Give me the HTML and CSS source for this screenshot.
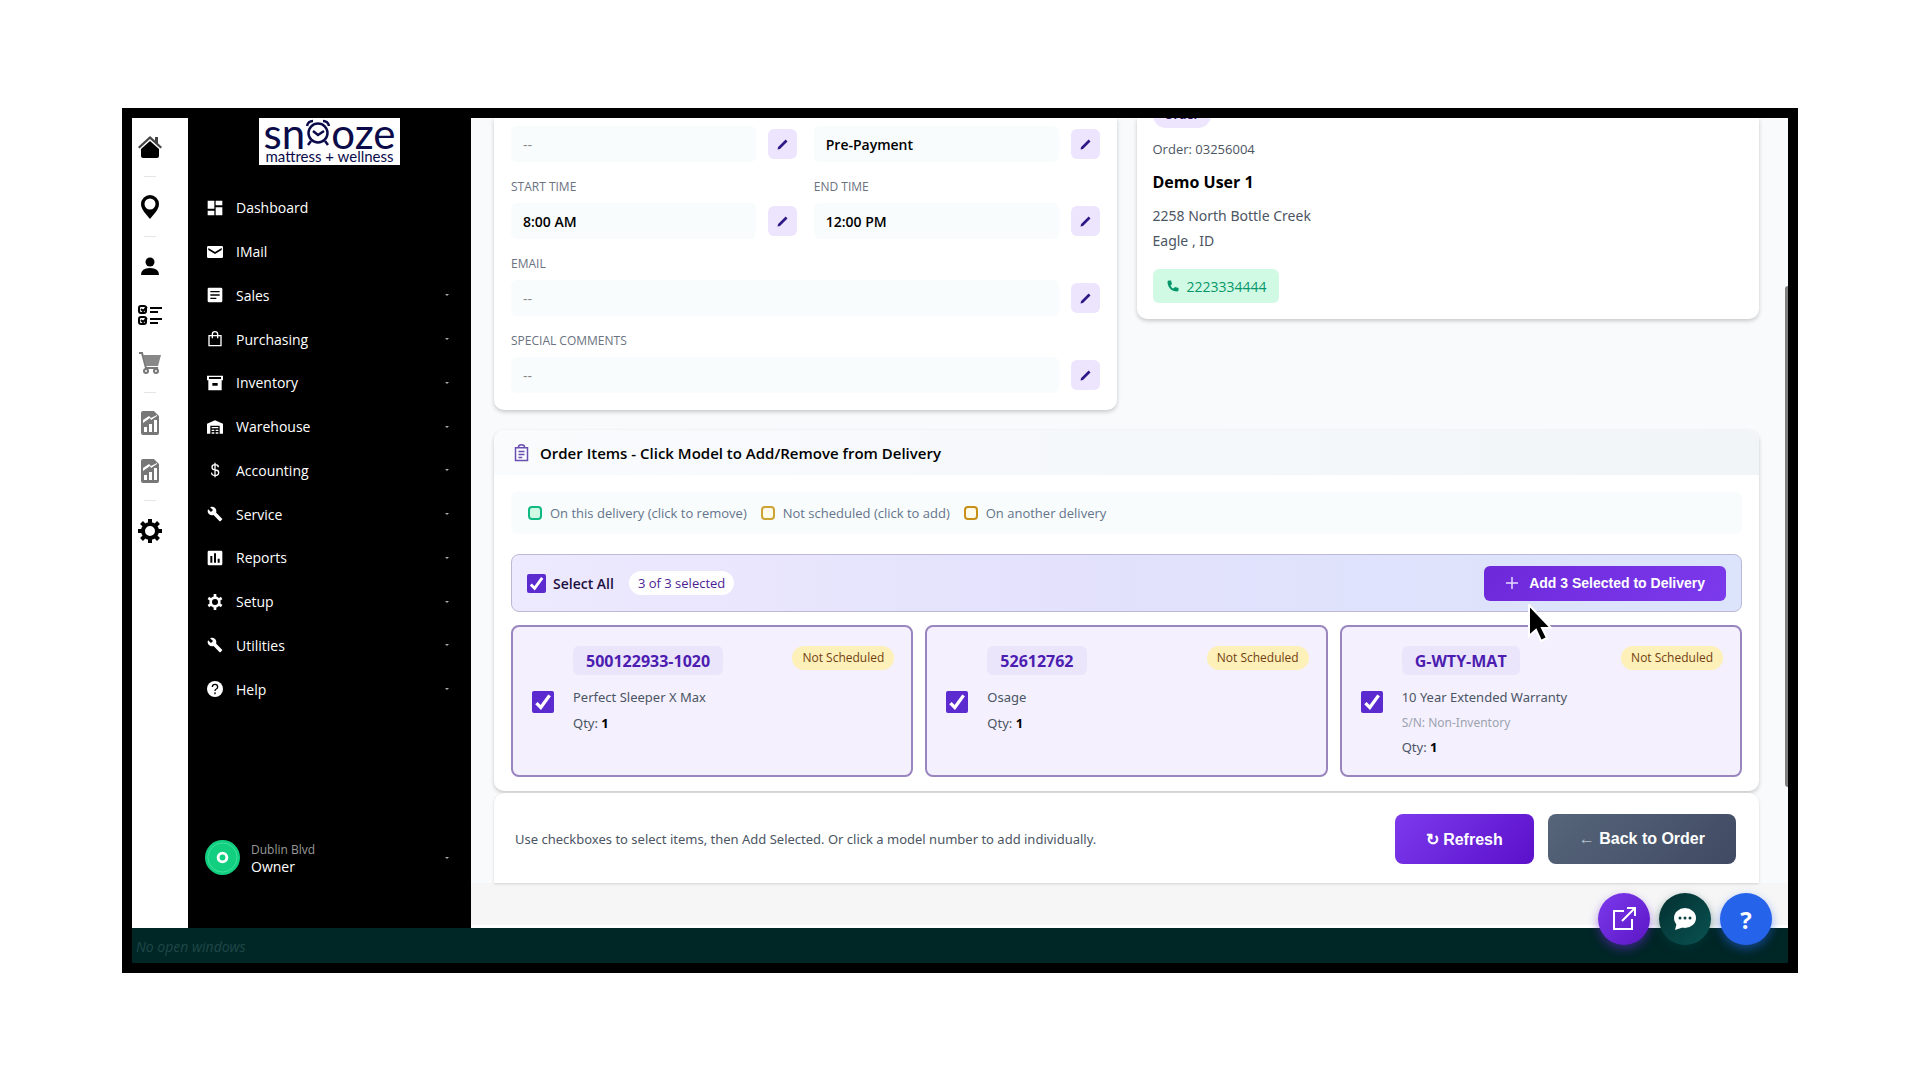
FILE: index.html
```
<!DOCTYPE html>
<html lang="en">
<head>
    <meta charset="UTF-8">
    <meta name="viewport" content="width=device-width, initial-scale=1.0">
    <title>Delivery - Order Items</title>
    <link rel="stylesheet" href="styles.css">
</head>
<body>
    <!-- Shared icons -->
    <svg class="defs" aria-hidden="true">
        <symbol id="i-edit" viewBox="0 0 24 24"><path d="M4 20l1-4L17 4l3 3L8 19z"/></symbol>
        <symbol id="i-wrench" viewBox="0 0 24 24"><path d="M22.7 19l-9.1-9.1c.9-2.3.4-5-1.5-6.9-2-2-5-2.4-7.4-1.3L9 6 6 9 1.6 4.7C.4 7.1.9 10.1 2.9 12.1c1.900 1.900 4.600 2.400 6.900 1.500l9.100 9.100c.4.4 1 .4 1.400 0l2.300-2.300c.5-.4.5-1.100.1-1.400z"/></symbol>
        <symbol id="i-report" viewBox="0 0 24 24"><path fill="#777" fill-rule="evenodd" d="M5 0h11l5 5v17q0 2-2 2H5q-2 0-2-2V2q0-2 2-2zm1 16v5h3v-5zm5-3v8h3v-8zm5-4v12h3V9zM5 12l7-5 1 2 6-4v-1l-6 3-2-2-6 4z"/></symbol>
    </svg>

    <div class="app">
        <div class="main">
            <nav class="rail" aria-label="Shortcuts">
                <a href="#" aria-label="Home"><svg viewBox="0 0 24 24"><path d="M12 1L0 12l1.500 1.500L12 4l10.500 9.500L24 12l-4-3.700V2h-3v3.500z" fill="#444"/><path d="M12 6l9 8v7q0 2-2 2H5q-2 0-2-2v-7z"/></svg></a>
                <hr>
                <a href="#" aria-label="Locations"><svg viewBox="0 0 24 24"><path fill-rule="evenodd" d="M12 0a9 9 0 0 1 9 9c0 6-6 11-9 15C9 20 3 15 3 9a9 9 0 0 1 9-9zm0 3.500a5.500 5.500 0 1 0 0 11 5.500 5.500 0 0 0 0-11z"/></svg></a>
                <hr>
                <a href="#" aria-label="Customers"><svg viewBox="0 0 24 24"><circle cx="12" cy="7" r="4.500"/><path d="M3 20q0-7 9-7t9 7z"/></svg></a>
                <a href="#" aria-label="Tasks"><svg viewBox="0 0 24 24"><g fill="none" stroke="#000" stroke-width="2"><rect x="1" y="3" width="7" height="7" rx="2"/><rect x="1" y="14" width="7" height="7" rx="2"/><path d="M3 6l2 2 4-4M3 17l2 2 4-4M12 5h12M12 9h8M12 16h12M12 20h8"/></g></svg></a>
                <a href="#" aria-label="Cart"><svg viewBox="0 0 24 24"><path d="M1 2h3l4 15h12" fill="none" stroke="#777" stroke-width="2"/><path d="M5 4h18l-3 11H8z" fill="#888"/><circle cx="8" cy="20" r="2" fill="#fff" stroke="#777" stroke-width="2"/><circle cx="18" cy="20" r="2" fill="#fff" stroke="#777" stroke-width="2"/></svg></a>
                <hr>
                <a href="#" aria-label="Sales report"><svg viewBox="0 0 24 24"><use href="#i-report"/></svg></a>
                <a href="#" aria-label="Stock report"><svg viewBox="0 0 24 24"><use href="#i-report"/></svg></a>
                <hr>
                <a href="#" aria-label="Settings"><svg viewBox="0 0 24 24"><circle cx="12" cy="12" r="7" fill="none" stroke="#000" stroke-width="4"/><path d="M12 0v5M12 19v5M0 12h5M19 12h5M3.500 3.500L7 7M17 17l3.500 3.500M3.500 20.500L7 17M17 7l3.500-3.500" stroke="#000" stroke-width="4"/></svg></a>
            </nav>

            <aside class="sidebar">
                <div class="logo">
                    <div class="logo-name">sn<svg viewBox="0 0 24 28"><g fill="none" stroke="#0b0b4a" stroke-width="2.500"><circle cx="12" cy="14" r="9.500"/><path d="M7 12l5 4 6-4M5 22l-3 4M19 22l3 4M1 7q1-5 6-5M23 7q-1-5-6-5"/></g></svg>oze</div>
                    <div class="logo-sub">mattress + wellness</div>
                </div>
                <nav class="menu" aria-label="Main menu">
                    <a href="#"><svg viewBox="0 0 24 24"><path d="M1 1h10v12H1zM13 1h10v7H13zM1 16h10v7H1zM13 11h10v12H13z"/></svg>Dashboard</a>
                    <a href="#"><svg viewBox="0 0 24 24"><path fill-rule="evenodd" d="M2 3h20q2 0 2 2v14q0 2-2 2H2q-2 0-2-2V5q0-2 2-2zm0 3v3l10 6 10-6V6l-10 6z"/></svg>IMail</a>
                    <a href="#" class="sub"><svg viewBox="0 0 24 24"><path fill-rule="evenodd" d="M3 1h18q2 0 2 2v18q0 2-2 2H3q-2 0-2-2V3q0-2 2-2zm2 5v2h14V6zm0 5v2h14v-2zm0 5v2h9v-2z"/></svg>Sales</a>
                    <a href="#" class="sub"><svg viewBox="0 0 24 24"><path d="M3 7h18v15H3zM8 11V5q0-4 4-4t4 4v6" fill="none" stroke="#fff" stroke-width="2"/></svg>Purchasing</a>
                    <a href="#" class="sub"><svg viewBox="0 0 24 24"><path fill-rule="evenodd" d="M0 1h24v7h-2v15H2V8H0zm3 2v3h18V3zm5 9v4h8v-4z"/></svg>Inventory</a>
                    <a href="#" class="sub"><svg viewBox="0 0 24 24"><path d="M0 7l12-5 12 5v15h-5V10H5v12H0zM7 12h10v2H7zM7 16h4v2H7zM13 16h4v2h-4zM7 20h4v2H7zM13 20h4v2h-4z"/></svg>Warehouse</a>
                    <a href="#" class="sub"><svg viewBox="0 0 24 24"><path d="M17 8q0-4-5-4-4.500 0-4.500 4t5 4 5 4-5.500 4-5-4M12 1v22" fill="none" stroke="#fff" stroke-width="2"/></svg>Accounting</a>
                    <a href="#" class="sub"><svg viewBox="0 0 24 24"><use href="#i-wrench"/></svg>Service</a>
                    <a href="#" class="sub"><svg viewBox="0 0 24 24"><path fill-rule="evenodd" d="M3 1h18q2 0 2 2v18q0 2-2 2H3q-2 0-2-2V3q0-2 2-2zm2 8v10h3V9zm5.500-4v14h3V5zM16 13v6h3v-6z"/></svg>Reports</a>
                    <a href="#" class="sub"><svg viewBox="0 0 24 24"><circle cx="12" cy="12" r="6.500" fill="none" stroke="#fff" stroke-width="4"/><path d="M12 0v5M12 19v5M2 6l4 2.500M18 15.500l4 2.500M2 18l4-2.500M18 8.500L22 6" stroke="#fff" stroke-width="4"/></svg>Setup</a>
                    <a href="#" class="sub"><svg viewBox="0 0 24 24"><use href="#i-wrench"/></svg>Utilities</a>
                    <a href="#" class="sub"><svg viewBox="0 0 24 24"><circle cx="12" cy="12" r="12"/><path d="M8 9q0-4 4-4t4 4q0 2-2 3t-2 3M12 17v3" fill="none" stroke="#000" stroke-width="2"/></svg>Help</a>
                </nav>
                <div class="user">
                    <svg class="avatar" viewBox="0 0 36 36"><circle cx="18" cy="18" r="18" fill="#12cf80"/><circle cx="18" cy="18" r="15" fill="none" stroke="#3fe09c"/><circle cx="18" cy="18" r="4.500" fill="none" stroke="#fff" stroke-width="3"/></svg>
                    <div class="user-text"><small>Dublin Blvd</small><span>Owner</span></div>
                </div>
            </aside>

            <main class="content">
                <div class="page">
                    <div class="top-cards">
                        <section class="card details">
                            <div class="field">
                                <div class="row"><input type="text" class="empty" value="--" aria-label="Route" readonly><button class="edit" aria-label="Edit"><svg><use href="#i-edit"/></svg></button></div>
                            </div>
                            <div class="field">
                                <div class="row"><input type="text" value="Pre-Payment" aria-label="Payment" readonly><button class="edit" aria-label="Edit"><svg><use href="#i-edit"/></svg></button></div>
                            </div>
                            <div class="field">
                                <label for="start">START TIME</label>
                                <div class="row"><input type="text" id="start" value="8:00 AM" readonly><button class="edit" aria-label="Edit start time"><svg><use href="#i-edit"/></svg></button></div>
                            </div>
                            <div class="field">
                                <label for="end">END TIME</label>
                                <div class="row"><input type="text" id="end" value="12:00 PM" readonly><button class="edit" aria-label="Edit end time"><svg><use href="#i-edit"/></svg></button></div>
                            </div>
                            <div class="field wide">
                                <label for="email">EMAIL</label>
                                <div class="row"><input type="text" id="email" class="empty" value="--" readonly><button class="edit" aria-label="Edit email"><svg><use href="#i-edit"/></svg></button></div>
                            </div>
                            <div class="field wide">
                                <label for="comments">SPECIAL COMMENTS</label>
                                <div class="row"><input type="text" id="comments" class="empty" value="--" readonly><button class="edit" aria-label="Edit comments"><svg><use href="#i-edit"/></svg></button></div>
                            </div>
                        </section>

                        <section class="card customer">
                            <span class="type">Order</span>
                            <div class="order-no">Order: 03256004</div>
                            <h2>Demo User 1</h2>
                            <address>2258 North Bottle Creek<br>Eagle , ID</address>
                            <a class="phone" href="tel:2223334444"><svg viewBox="0 0 24 24"><path d="M3 1h5l2 7-3 3q2 5 6 6l3-3 7 2v5l-2 2C9 23 1 15 1 3z"/></svg>2223334444</a>
                        </section>
                    </div>

                    <section class="card items">
                        <h2 class="items-head"><svg viewBox="0 0 20 24"><path d="M2 5h16v17H2zM6 5V4q0-3 4-3t4 3v1M6 10h8M6 14h8M6 18h5" fill="none" stroke="#6b4fb0" stroke-width="2"/></svg>Order Items - Click Model to Add/Remove from Delivery</h2>
                        <div class="items-body">
                            <div class="legend">
                                <span class="key green">On this delivery (click to remove)</span>
                                <span class="key yellow">Not scheduled (click to add)</span>
                                <span class="key amber">On another delivery</span>
                            </div>
                            <div class="select-bar">
                                <label class="select-all"><input type="checkbox" checked>Select All</label>
                                <span class="count">3 of 3 selected</span>
                                <button class="add"><svg viewBox="0 0 14 14"><path d="M7 1v12M1 7h12" stroke="#e6dcff" stroke-width="1.500"/></svg>Add 3 Selected to Delivery</button>
                            </div>
                            <div class="item-grid">
                                <article class="item">
                                    <input type="checkbox" aria-label="500122933-1020" checked>
                                    <div class="info">
                                        <button class="model">500122933-1020</button>
                                        <p>Perfect Sleeper X Max</p>
                                        <p>Qty: <b>1</b></p>
                                    </div>
                                    <span class="status">Not Scheduled</span>
                                </article>
                                <article class="item">
                                    <input type="checkbox" aria-label="52612762" checked>
                                    <div class="info">
                                        <button class="model">52612762</button>
                                        <p>Osage</p>
                                        <p>Qty: <b>1</b></p>
                                    </div>
                                    <span class="status">Not Scheduled</span>
                                </article>
                                <article class="item">
                                    <input type="checkbox" aria-label="G-WTY-MAT" checked>
                                    <div class="info">
                                        <button class="model">G-WTY-MAT</button>
                                        <p>10 Year Extended Warranty</p>
                                        <p class="serial">S/N: Non-Inventory</p>
                                        <p>Qty: <b>1</b></p>
                                    </div>
                                    <span class="status">Not Scheduled</span>
                                </article>
                            </div>
                        </div>
                    </section>

                    <div class="card actions">
                        <p>Use checkboxes to select items, then Add Selected. Or click a model number to add individually.</p>
                        <button class="refresh">↻ Refresh</button>
                        <button class="back"><span>←</span> Back to Order</button>
                    </div>
                </div>
                <div class="scrollbar"></div>
            </main>
        </div>

        <footer class="taskbar">No open windows</footer>

        <div class="fabs">
            <button class="fab purple" aria-label="Open in new window"><svg viewBox="0 0 24 24"><path d="M12 4H2v18h18V12M15 1h8v8M23 1L10 14" fill="none" stroke="#fff" stroke-width="2"/></svg></button>
            <button class="fab teal" aria-label="Chat"><svg viewBox="0 0 24 24"><ellipse cx="12" cy="11" rx="11" ry="10" fill="#fff"/><path d="M4 15l-2 8 9-3z" fill="#fff"/><circle cx="7" cy="11" r="1.500" fill="#06403f"/><circle cx="12" cy="11" r="1.500" fill="#06403f"/><circle cx="17" cy="11" r="1.500" fill="#06403f"/></svg></button>
            <button class="fab blue">?</button>
        </div>

        <svg class="cursor" viewBox="0 0 24 38"><path d="M1 1v31l7-6 5 11 6-3-5-10h9z" fill="#000" stroke="#fff" stroke-width="2"/></svg>
    </div>
</body>
</html>
```
FILE: styles.css
```
*, *::before {
    box-sizing: border-box;
}
body {
    margin: 0;
    padding: 108px 122px;
    background: #fff;
    font-family: "Open Sans", "Noto Sans", sans-serif;
    font-size: 14px;
    color: #4b5563;
}
h2, p {
    margin: 0;
}
a {
    text-decoration: none;
}
button {
    border: none;
    cursor: pointer;
}
.defs {
    display: none;
}
.app {
    position: relative;
    border: 10px solid #000;
}
.main {
    display: flex;
}

/* icon rail */
.rail {
    width: 56px;
    padding: 17px 20px 0 0;
    display: flex;
    flex-direction: column;
    align-items: center;
    background: #fff;
}
.rail a {
    width: 24px;
    height: 24px;
}
.rail svg {
    display: block;
    width: 24px;
    height: 24px;
}
.rail hr {
    width: 12px;
    margin: 17px 0 18px;
    border: 0;
    border-top: 1px solid #e5e5e5;
}
.rail a + a {
    margin-top: 24px;
}

/* sidebar */
.sidebar {
    width: 283px;
    display: flex;
    flex-direction: column;
    background: #000;
}
.logo {
    align-self: center;
    width: 141px;
    height: 47px;
    margin-bottom: 21px;
    background: #fff;
    color: #0b0b4a;
    font-family: Lato, sans-serif;
    text-align: center;
}
.logo-name {
    display: flex;
    justify-content: center;
    align-items: center;
    font-size: 42px;
    line-height: 30px;
    height: 30px;
}
.logo-name svg {
    width: 26px;
    height: 28px;
}
.logo-sub {
    font-size: 15px;
    line-height: 16px;
}
.menu {
    flex: 1;
    display: flex;
    flex-direction: column;
}
.menu a {
    flex: 1;
    display: flex;
    align-items: center;
    gap: 13px;
    padding: 0 22px 0 19px;
    color: #fff;
    font-weight: 500;
}
.menu svg {
    width: 16px;
    height: 16px;
    fill: #fff;
}
.sub::after, .user::after {
    content: "";
    margin-left: auto;
    border: 2px solid transparent;
    border-top: 2px solid #aaa;
    border-bottom: 0;
}
.user {
    display: flex;
    align-items: center;
    gap: 11px;
    padding: 129px 22px 53px 17px;
    color: #fff;
}
.avatar {
    width: 35px;
    height: 35px;
}
.user-text {
    display: flex;
    flex-direction: column;
    line-height: 17px;
}
.user-text small {
    font-size: 12px;
    color: #999;
}

/* content */
.content {
    flex: 1;
    position: relative;
    background: #f6f6f6;
    border-bottom: 3px solid #fff;
    overflow: hidden;
}
.page {
    padding: 0 29px 0 23px;
    margin-bottom: 42px;
    background: #f8fafc;
}
.card {
    background: #fff;
    border-radius: 10px;
    box-shadow: 0 2px 4px rgba(0, 0, 0, 0.2);
}
.top-cards {
    display: grid;
    grid-template-columns: 1fr 1fr;
    gap: 20px;
    align-items: start;
}
.details {
    display: grid;
    grid-template-columns: 1fr 1fr;
    gap: 17px;
    padding: 8px 17px 17px;
    border-radius: 0 0 10px 10px;
}
.wide {
    grid-column: span 2;
}
.field label {
    display: block;
    margin-bottom: 8px;
    font-size: 12px;
    line-height: 16px;
    color: #6b7280;
}
.row {
    display: flex;
    align-items: center;
    gap: 12px;
}
.row input {
    flex: 1;
    min-width: 0;
    height: 36px;
    padding: 0 12px;
    border: 0;
    border-radius: 6px;
    background: #f8fcfd;
    font-family: inherit;
    font-size: 14px;
    font-weight: 600;
    color: #000;
}
.row input.empty {
    font-weight: 400;
    color: #888;
}
.edit {
    width: 29px;
    height: 30px;
    padding: 7px;
    border-radius: 6px;
    background: #ede5fe;
}
.edit svg {
    display: block;
    width: 15px;
    height: 15px;
    fill: #2e1a87;
}
.customer {
    padding: 0 16px 16px;
    border-radius: 0 0 10px 10px;
}
.type {
    display: block;
    width: 58px;
    height: 26px;
    margin-top: -16px;
    border-radius: 13px;
    background: #ede5fe;
    color: #2e1065;
    font-size: 12px;
    font-weight: 700;
    line-height: 26px;
    text-align: center;
}
.order-no {
    margin-top: 11px;
    font-size: 13px;
    line-height: 20px;
}
.customer h2 {
    margin-top: 11px;
    font-size: 16px;
    line-height: 24px;
    color: #000;
}
.customer address {
    margin-top: 9px;
    font-family: "Noto Sans", sans-serif;
    font-style: normal;
    line-height: 25px;
}
.phone {
    display: inline-flex;
    align-items: center;
    gap: 8px;
    height: 34px;
    margin-top: 16px;
    padding: 0 12px 0 14px;
    border-radius: 6px;
    background: #d1fae5;
    color: #059669;
}
.phone svg {
    width: 12px;
    height: 12px;
    fill: #059669;
}

/* order items */
.items {
    margin-top: 20px;
}
.items-head {
    display: flex;
    align-items: center;
    gap: 11px;
    height: 45px;
    padding: 0 20px;
    border-radius: 10px 10px 0 0;
    background: linear-gradient(90deg, #f9fbfd, #f1f5f7);
    font-size: 15px;
    font-weight: 600;
    color: #000;
}
.items-head svg {
    width: 15px;
    height: 18px;
}
.items-body {
    padding: 17px;
    padding-bottom: 14px;
}
.legend {
    display: flex;
    align-items: center;
    gap: 14px;
    height: 42px;
    padding: 0 17px;
    border-radius: 6px;
    background: #f8fcfd;
    font-size: 13px;
    color: #64748b;
}
.key {
    display: flex;
    align-items: center;
    gap: 8px;
}
.key::before {
    content: "";
    width: 14px;
    height: 14px;
    border: 2px solid;
    border-radius: 4px;
}
.green::before {
    border-color: #10b981;
    background: #d1fae5;
}
.yellow::before {
    border-color: #cda434;
    background: #fffbeb;
}
.amber::before {
    border-color: #c99018;
    background: #fffbeb;
}
.select-bar {
    display: flex;
    align-items: center;
    gap: 15px;
    height: 58px;
    margin: 20px 0 13px;
    padding: 0 15px;
    border: 1px solid #bdb8d6;
    border-radius: 8px;
    background: linear-gradient(90deg, #ede9fe, #e2e1fc 50%, #dbe4fb);
}
.select-all {
    display: flex;
    align-items: center;
    gap: 7px;
    font-weight: 600;
    color: #1e1040;
}
input[type="checkbox"] {
    appearance: none;
    width: 19px;
    height: 19px;
    margin: 0;
    border-radius: 2px;
    background: #5b2bd0 url("data:image/svg+xml,%3Csvg xmlns='http://www.w3.org/2000/svg' viewBox='0 0 20 20'%3E%3Cpath d='M4 11l4 4 8-11' fill='none' stroke='white' stroke-width='3'/%3E%3C/svg%3E") center / contain;
}
.count {
    padding: 0 9px;
    border-radius: 12px;
    background: #fff;
    font-size: 13px;
    font-weight: 500;
    line-height: 24px;
    color: #4c1d95;
}
.add {
    display: flex;
    align-items: center;
    gap: 10px;
    height: 35px;
    margin-left: auto;
    padding: 0 21px;
    border-radius: 6px;
    background: linear-gradient(135deg, #6d28d9, #7c3aed);
    color: #fff;
    font: bold 14px "Liberation Sans", Arial, sans-serif;
}
.add svg {
    width: 14px;
    height: 14px;
}
.item-grid {
    display: grid;
    grid-template-columns: repeat(3, 1fr);
    gap: 12px;
}
.item {
    display: flex;
    gap: 19px;
    padding: 19px 17px 18px 19px;
    border: 2px solid #9a86bf;
    border-radius: 8px;
    background: #f4f0fe;
}
.item input[type="checkbox"] {
    align-self: center;
    width: 22px;
    height: 22px;
}
.info {
    flex: 1;
}
.model {
    height: 29px;
    margin-bottom: 6px;
    padding: 0 13px;
    border-radius: 6px;
    background: #ebe5fb;
    font-family: inherit;
    font-size: 16px;
    font-weight: 700;
    color: #4c1db0;
}
.info p {
    margin-top: 6px;
    font-family: "Noto Sans", sans-serif;
    font-size: 13px;
    line-height: 20px;
}
.info .serial {
    font-size: 12px;
    color: #9ca3af;
}
.info .serial + p {
    margin-top: 4px;
}
.info b {
    color: #000;
}
.status {
    align-self: flex-start;
    padding: 0 10px;
    border-radius: 12px;
    background: #fdf0b8;
    font-size: 12px;
    font-weight: 500;
    line-height: 24px;
    color: #713f12;
}
.actions {
    display: flex;
    align-items: center;
    gap: 14px;
    margin-top: 2px;
    padding: 21px 23px 19px 21px;
    border-radius: 10px 10px 0 0;
    box-shadow: 0 1px 3px rgba(0, 0, 0, 0.15);
}
.actions p {
    margin-right: auto;
    font-family: "Noto Sans", sans-serif;
    font-size: 13px;
}
.actions button {
    height: 50px;
    padding: 0 31px;
    border-radius: 8px;
    color: #fff;
    font: bold 16px "Liberation Sans", Arial, sans-serif;
}
.actions .refresh {
    background: linear-gradient(135deg, #7c3aed, #5b10c9);
}
.actions .back {
    background: linear-gradient(135deg, #56657a, #404a63);
}
.back span {
    color: #b8c0cc;
}
.scrollbar {
    position: absolute;
    top: 168px;
    right: 0;
    bottom: 138px;
    width: 3px;
    border-radius: 3px 0 0 3px;
    background: #808080;
}
.taskbar {
    padding: 3px 4px 0;
    background: #002626;
    color: #1f4848;
    font-size: 14px;
    font-style: italic;
    line-height: 32px;
}

/* floating buttons */
.fabs {
    position: absolute;
    right: 16px;
    bottom: 18px;
    display: flex;
    gap: 9px;
}
.fab {
    display: flex;
    align-items: center;
    justify-content: center;
    width: 52px;
    height: 52px;
    border-radius: 50%;
    color: #fff;
    font: bold 24px "Open Sans", sans-serif;
}
.fab svg {
    width: 24px;
    height: 24px;
}
.purple {
    background: linear-gradient(135deg, #7c3aed, #5b16c4);
    box-shadow: 0 4px 10px rgba(109, 40, 217, 0.5);
}
.teal {
    background: linear-gradient(135deg, #033030, #0a5252);
    box-shadow: 0 4px 10px rgba(0, 60, 60, 0.5);
}
.blue {
    background: #2563eb;
    box-shadow: 0 4px 10px rgba(37, 99, 235, 0.5);
}
.cursor {
    position: absolute;
    top: 486px;
    left: 1396px;
    width: 24px;
    height: 38px;
}
```
